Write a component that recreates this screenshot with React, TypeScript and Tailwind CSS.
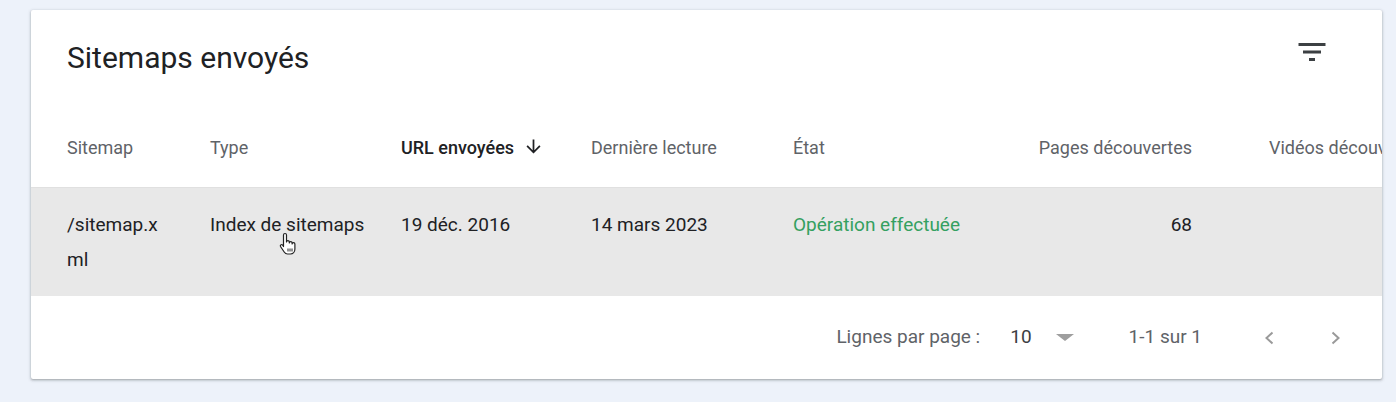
import React from 'react';

type Col = { label: string; width: string; align?: 'right'; active?: boolean };

const cols: Col[] = [
  { label: 'Sitemap', width: 'w-[143px]' },
  { label: 'Type', width: 'w-[191px]' },
  { label: 'URL envoyées', width: 'w-[190px]', active: true },
  { label: 'Dernière lecture', width: 'w-[202px]' },
  { label: 'État', width: 'w-[207px]' },
  { label: 'Pages découvertes', width: 'w-[192px]', align: 'right' },
];

function FilterIcon() {
  return (
    <svg width="36" height="36" viewBox="0 0 24 24" fill="#3c4043">
      <path d="M10 18h4v-2h-4v2zM3 6v2h18V6H3zm3 7h12v-2H6v2z" />
    </svg>
  );
}

function ArrowDown() {
  return (
    <svg width="21" height="21" viewBox="0 0 24 24" fill="#202124">
      <path d="M20 12l-1.41-1.41L13 16.17V4h-2v12.17l-5.58-5.59L4 12l8 8 8-8z" />
    </svg>
  );
}

function HandCursor() {
  return (
    <svg
      width="20"
      height="24"
      viewBox="0 0 20 24"
      className="absolute left-[278px] top-[232px]"
    >
      <path
        d="M5.5 3a1.5 1.5 0 0 1 3 0V10a1.4 1.4 0 0 1 2.8 0V11a1.4 1.4 0 0 1 2.8 0V12a1.4 1.4 0 0 1 2.8 0V17c0 3-2 5-4.5 5H9.5c-1.6 0-2.5-.8-3.3-2L2.5 14.5a1.3 1.3 0 0 1 2-1.6L5.5 14.5Z"
        fill="#fff"
        stroke="#222"
        strokeWidth="1.2"
        strokeLinejoin="round"
      />
      <path d="M10 16.5v3M12 16.5v3M14 16.5v3" stroke="#222" strokeWidth="1" />
    </svg>
  );
}

export default function App() {
  return (
    <div
      className="relative h-[402px] w-[1396px] overflow-hidden bg-[#edf2fa] pt-[10px]"
      style={{ fontFamily: 'Roboto, "Liberation Sans", sans-serif' }}
    >
      <div className="ml-[31px] w-[1351px] overflow-hidden rounded-[2px] bg-white shadow-[0_1px_2px_rgba(60,64,67,0.3),0_1px_3px_1px_rgba(60,64,67,0.15)]">
        {/* header */}
        <div className="flex items-start justify-between pl-[36px] pr-[52px]">
          <h2 className="mt-[30px] text-[30px] leading-[36px] font-normal text-[#202124]">
            Sitemaps envoyés
          </h2>
          <div className="mt-[24px]">
            <FilterIcon />
          </div>
        </div>

        {/* column headers */}
        <div className="flex whitespace-nowrap border-b border-[#e0e0e0] pt-[60px] pb-[27px] pl-[36px] text-[18px] leading-[24px] text-[#5f6368]">
          {cols.map((c) => (
            <div
              key={c.label}
              className={`${c.width} shrink-0 ${c.align === 'right' ? 'text-right' : ''}`}
            >
              {c.active ? (
                <span className="flex items-center font-medium text-[#202124]">
                  {c.label}
                  <span className="ml-[9px] mt-[-4px]">
                    <ArrowDown />
                  </span>
                </span>
              ) : (
                c.label
              )}
            </div>
          ))}
          <div className="ml-[77px] shrink-0">Vidéos découvertes</div>
        </div>

        {/* row */}
        <div className="flex bg-[#e8e8e8] py-[19px] pl-[36px] text-[19px] leading-[35px] text-[#202124]">
          <div className="w-[143px] shrink-0">
            <div className="w-[100px] break-all">/sitemap.xml</div>
          </div>
          <div className="w-[191px] shrink-0 whitespace-nowrap">Index de sitemaps</div>
          <div className="w-[190px] shrink-0">19 déc. 2016</div>
          <div className="w-[202px] shrink-0">14 mars 2023</div>
          <div className="w-[207px] shrink-0 whitespace-nowrap text-[#34a060]">
            Opération effectuée
          </div>
          <div className="w-[192px] shrink-0 text-right">68</div>
        </div>

        {/* footer */}
        <div className="flex h-[83px] items-center justify-end pr-[41px] text-[19px] text-[#5f6368]">
          <span>Lignes par page :</span>
          <span className="ml-[30px] text-[#3c4043]">10</span>
          <svg className="ml-[24px]" width="18" height="8" viewBox="0 0 18 8">
            <path d="M0 0h18L9 7z" fill="#9e9e9e" />
          </svg>
          <span className="ml-[55px]">1-1 sur 1</span>
          <svg className="ml-[62px]" width="10" height="14" viewBox="0 0 10 14">
            <path d="M8.5 1.5L2.5 7l6 5.5" fill="none" stroke="#9a9a9a" strokeWidth="2" />
          </svg>
          <svg className="ml-[57px]" width="10" height="14" viewBox="0 0 10 14">
            <path d="M1.5 1.5l6 5.5-6 5.5" fill="none" stroke="#9a9a9a" strokeWidth="2" />
          </svg>
        </div>
      </div>
      <HandCursor />
    </div>
  );
}
